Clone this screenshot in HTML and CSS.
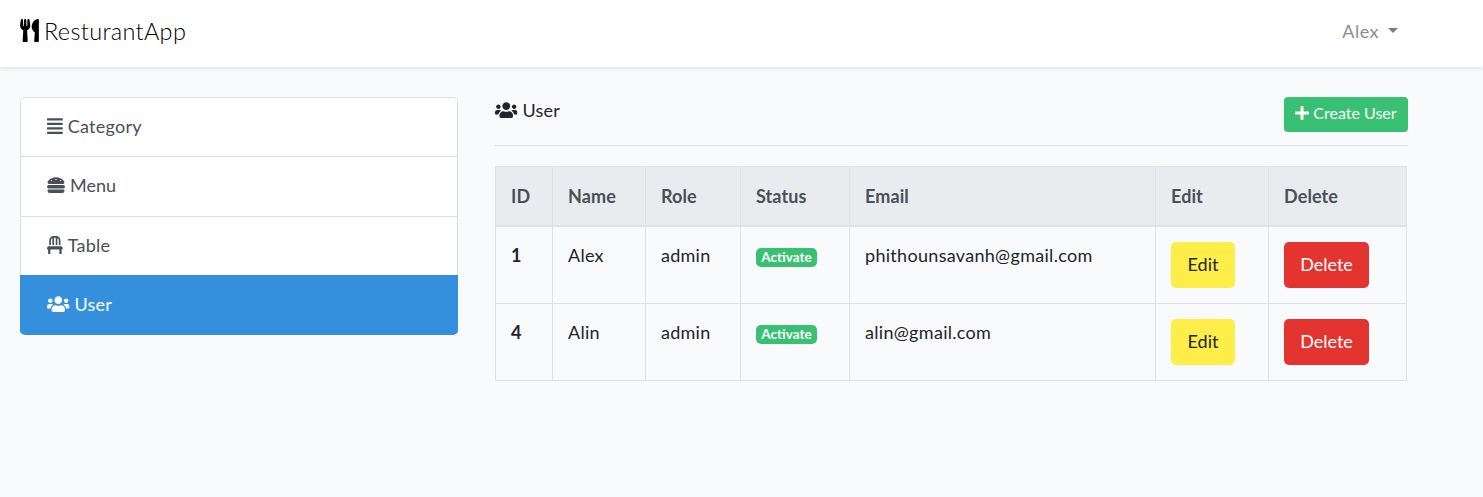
FILE: index.html
```html
<!DOCTYPE html>
<html lang="en">
<head>
<meta charset="utf-8">
<title>ResturantApp</title>
<link rel="stylesheet" href="styles.css">
</head>
<body>
<svg class="sprite" aria-hidden="true">
  <symbol id="users" viewBox="0 0 640 512"><path d="M96 224c35.3 0 64-28.7 64-64s-28.7-64-64-64-64 28.7-64 64 28.7 64 64 64zm448 0c35.3 0 64-28.7 64-64s-28.7-64-64-64-64 28.7-64 64 28.7 64 64 64zm32 32h-64c-17.6 0-33.5 7.1-45.1 18.6 40.3 22.1 68.9 62 75.1 109.4h66c17.7 0 32-14.3 32-32v-32c0-35.3-28.7-64-64-64zm-256 0c61.9 0 112-50.1 112-112S381.9 32 320 32 208 82.1 208 144s50.1 112 112 112zm76.8 32h-8.3c-20.8 10-43.9 16-68.5 16s-47.6-6-68.5-16h-8.3C179.6 288 128 339.6 128 403.2V432c0 26.5 21.5 48 48 48h288c26.5 0 48-21.5 48-48v-28.8c0-63.6-51.6-115.2-115.2-115.2zm-223.7-13.4C161.5 263.1 145.6 256 128 256H64c-35.3 0-64 28.7-64 64v32c0 17.7 14.3 32 32 32h65.9c6.3-47.4 34.9-87.3 75.2-109.4z"/></symbol>
</svg>
<nav class="navbar">
  <a class="brand"><svg class="icon icon-brand" viewBox="0 0 416 512"><path d="M207.9 15.2c.8 4.7 16.1 94.5 16.1 128.8 0 52.3-27.8 89.6-68.9 104.6L168 486.7c.7 13.7-10.2 25.3-24 25.3H80c-13.7 0-24.7-11.5-24-25.3l12.9-238.1C27.7 233.6 0 196.2 0 144 0 109.6 15.3 19.9 16.1 15.2 19.3-5.1 61.4-5.4 64 16.3v141.2c1.3 3.4 15.1 3.2 16 0 1.4-25.3 7.9-139.2 8-141.8 3.3-20.8 44.7-20.8 47.9 0 .2 2.7 6.6 116.5 8 141.8.9 3.2 14.8 3.4 16 0V16.3c2.6-21.6 44.8-21.4 47.9-1.1zm119.2 285.7l-15 185.1c-1.2 14 9.9 26 23.9 26h56c13.3 0 24-10.7 24-24V24c0-13.2-10.7-24-24-24-82.5 0-221.4 178.5-64.9 300.9z"/></svg><span>ResturantApp</span></a>
  <a class="account"><span>Alex</span><i class="caret"></i></a>
</nav>
<main class="layout">
  <div class="list-group">
    <a class="item"><svg class="icon icon-448" viewBox="0 0 448 512"><path d="M16 32h416a16 16 0 0 1 16 16v32a16 16 0 0 1-16 16H16A16 16 0 0 1 0 80V48a16 16 0 0 1 16-16zM16 160h416a16 16 0 0 1 16 16v32a16 16 0 0 1-16 16H16a16 16 0 0 1-16-16v-32a16 16 0 0 1 16-16zM16 288h416a16 16 0 0 1 16 16v32a16 16 0 0 1-16 16H16a16 16 0 0 1-16-16v-32a16 16 0 0 1 16-16zM16 416h416a16 16 0 0 1 16 16v32a16 16 0 0 1-16 16H16a16 16 0 0 1-16-16v-32a16 16 0 0 1 16-16z"/></svg><span>Category</span></a>
    <a class="item item-menu"><svg class="icon icon-512" viewBox="0 0 512 512"><path d="M464 256H48a48 48 0 0 0 0 96h416a48 48 0 0 0 0-96zm16 128H32a16 16 0 0 0-16 16v16a64 64 0 0 0 64 64h352a64 64 0 0 0 64-64v-16a16 16 0 0 0-16-16zM58.64 224h394.72c34.57 0 54.62-43.9 34.82-75.88C448 83.2 359.55 32.1 256 32c-103.54.1-192 51.2-232.18 116.11C4 180.09 24.07 224 58.64 224zM384 112a16 16 0 1 1-16 16 16 16 0 0 1 16-16zM256 80a16 16 0 1 1-16 16 16 16 0 0 1 16-16zm-128 32a16 16 0 1 1-16 16 16 16 0 0 1 16-16z"/></svg><span>Menu</span></a>
    <a class="item"><svg class="icon icon-448" viewBox="0 0 448 512"><path d="M112 128c0-29.5 16.2-55 40-68.9V256h48V48h48v208h48V59.1c23.8 13.9 40 39.4 40 68.9v128h48V128C384 57.3 326.7 0 256 0h-64C121.3 0 64 57.3 64 128v128h48zm334.3 213.9l-10.7-32c-4.4-13.1-16.6-21.9-30.4-21.9H42.7c-13.8 0-26 8.8-30.4 21.9l-10.7 32C-5.2 362.6 10.2 384 32 384v112c0 8.8 7.2 16 16 16h32c8.8 0 16-7.2 16-16V384h256v112c0 8.8 7.2 16 16 16h32c8.8 0 16-7.2 16-16V384c21.8 0 37.2-21.4 30.3-42.1z"/></svg><span>Table</span></a>
    <a class="item active"><svg class="icon icon-640"><use href="#users"/></svg><span>User</span></a>
  </div>
  <section class="content">
    <header class="heading">
      <div class="title"><svg class="icon icon-640"><use href="#users"/></svg><span>User</span></div>
      <a class="btn-create"><svg class="icon icon-plus" viewBox="0 0 448 512"><path d="M416 208H272V64c0-17.67-14.33-32-32-32h-32c-17.67 0-32 14.33-32 32v144H32c-17.67 0-32 14.33-32 32v32c0 17.67 14.33 32 32 32h144v144c0 17.67 14.33 32 32 32h32c17.67 0 32-14.33 32-32V304h144c17.67 0 32-14.33 32-32v-32c0-17.67-14.33-32-32-32z"/></svg><span>Create User</span></a>
    </header>
    <table class="table">
      <colgroup><col class="c-id"><col class="c-name"><col class="c-role"><col class="c-status"><col class="c-email"><col class="c-edit"><col class="c-delete"></colgroup>
      <thead><tr><th>ID</th><th>Name</th><th>Role</th><th>Status</th><th>Email</th><th>Edit</th><th>Delete</th></tr></thead>
      <tbody>
        <tr><td class="num">1</td><td>Alex</td><td>admin</td><td><span class="badge">Activate</span></td><td class="email">phithounsavanh@gmail.com</td><td><a class="btn edit">Edit</a></td><td><a class="btn delete">Delete</a></td></tr>
        <tr><td class="num">4</td><td>Alin</td><td>admin</td><td><span class="badge">Activate</span></td><td class="email">alin@gmail.com</td><td><a class="btn edit">Edit</a></td><td><a class="btn delete">Delete</a></td></tr>
      </tbody>
    </table>
  </section>
</main>
</body>
</html>
```
FILE: styles.css
```css
* { box-sizing: border-box; }
body { margin: 0; min-height: 497px; background: #f8fafc; color: #212529; font: 400 18px/28px Lato, "Open Sans", sans-serif; letter-spacing: .25px; }
.sprite { display: none; }
.icon { display: block; flex: none; height: 18px; fill: currentColor; }
.icon-448 { width: 15.75px; }
.icon-512 { width: 18px; }
.icon-640 { width: 22.5px; }
.icon-brand { width: 19px; height: 23px; }
.icon-plus { width: 14px; height: 16px; }

.navbar { display: flex; align-items: center; justify-content: space-between; height: 67px; padding: 0 85px 6px 20px; background: #fff; box-shadow: 0 3px 2px rgba(0, 0, 0, .055); }
.brand { display: flex; align-items: center; gap: 5px; font-size: 23.5px; font-weight: 300; letter-spacing: .33px; color: #000; }
.account { display: flex; align-items: center; gap: 9px; color: #8c8c8c; letter-spacing: .5px; }
.caret { border: 5.5px solid transparent; border-top-color: #7c7c7c; border-bottom: 0; }

.layout { display: flex; align-items: flex-start; gap: 37px; padding: 30px 75px 0 20px; }
.list-group { width: 438px; height: 238px; display: grid; grid-template-rows: 59px 60px 59px 60px; border-radius: 5px; overflow: hidden; color: #495057; }
.item { display: flex; align-items: center; gap: 5px; padding: 0 25px 2px 26px; background: #fff; border: 1px solid #dcdee0; border-bottom: 0; }
.item:first-child { border-radius: 5px 5px 0 0; }
.item-menu { padding-bottom: 4px; letter-spacing: 0; }
.item.active { padding-bottom: 4px; color: #fff; background: #3490dc; border-color: #3490dc; }
.content { width: 913px; }
.heading { display: flex; justify-content: space-between; align-items: flex-start; height: 49px; border-bottom: 1px solid #dcdee0; margin-bottom: 20px; }
.title { display: flex; align-items: center; gap: 5px; height: 26px; }
.btn-create { display: flex; align-items: center; justify-content: center; gap: 4px; width: 124px; height: 35px; padding-bottom: 3px; border-radius: 4px; background: #38c172; color: #fff; font-size: 16px; letter-spacing: 0; }

.table { width: 912px; table-layout: fixed; border-collapse: collapse; }
.c-id { width: 57px; }
.c-name { width: 93px; }
.c-role { width: 95px; }
.c-status { width: 109px; }
.c-email { width: 306px; }
.c-edit { width: 113px; }
.c-delete { width: 138px; }
.table th, .table td { padding: 15px 0 0 15px; border: 1px solid #dee2e6; text-align: left; vertical-align: top; white-space: nowrap; }
.table th { height: 59px; background: #e9ecef; color: #495057; border-bottom-width: 2px; letter-spacing: .1px; }
.table td { height: 77px; line-height: 26px; }
.table tbody tr:first-child td { height: 78px; }
.table .num { font-weight: 700; }
.table .email { letter-spacing: .3px; }
.badge { display: block; width: 61px; height: 19px; margin-top: 6px; border-radius: 5px; background: #38c172; color: #fff; font-size: 13.5px; font-weight: 700; line-height: 19px; text-align: center; letter-spacing: 0; }
.btn { display: block; height: 46px; border-radius: 5px; line-height: 44px; text-align: center; letter-spacing: 0; }
.edit { width: 64px; background: #ffed4a; }
.delete { width: 85px; background: #e3342f; color: #fff; }
```
